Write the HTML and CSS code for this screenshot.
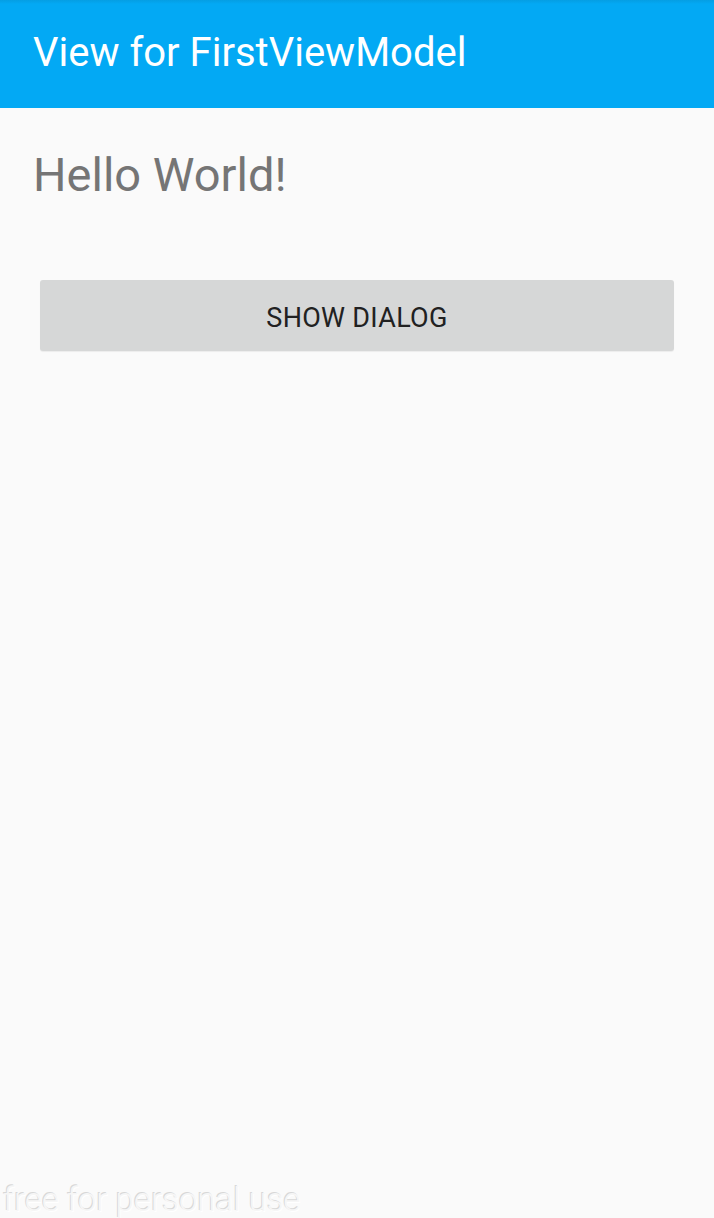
FILE: index.html
```html
<!DOCTYPE html>
<html>
<head>
<meta charset="utf-8">
<link rel="stylesheet" href="styles.css">
</head>
<body>
<div class="app">
  <header class="toolbar">
    <h1 class="title">View for FirstViewModel</h1>
  </header>
  <main class="content">
    <p class="hello">Hello World!</p>
    <button class="btn">SHOW DIALOG</button>
  </main>
  <footer class="watermark">free for personal use</footer>
</div>
</body>
</html>
```
FILE: styles.css
```css
html, body {
  margin: 0;
  padding: 0;
  height: 100%;
}
body {
  background: #fafafa;
  font-family: Roboto, "Liberation Sans", sans-serif;
}
.app {
  height: 1218px;
  display: flex;
  flex-direction: column;
}
.toolbar {
  height: 108px;
  background: linear-gradient(to bottom, #059ee3 0, #03a9f4 4px, #03a9f4 100%);
  display: flex;
  align-items: center;
  padding-left: 33px;
  box-sizing: border-box;
}
.title {
  margin: 0;
  color: #ffffff;
  font-weight: 400;
  font-size: 40px;
  line-height: 1;
  padding-bottom: 2px;
}
.content {
  flex: 1;
  display: flex;
  flex-direction: column;
  padding: 0 40px 0 33px;
}
.hello {
  margin: 40px 0 0 0;
  font-size: 47px;
  line-height: 54px;
  color: #757575;
}
.btn {
  margin: 78px 0 0 7px;
  height: 71px;
  padding: 4px 0 0 0;
  border: none;
  border-radius: 3px;
  background: #d6d7d7;
  color: #212121;
  font-family: Roboto, "Liberation Sans", sans-serif;
  font-size: 27px;
  letter-spacing: 0.3px;
  box-shadow: 0 1px 1px rgba(0,0,0,0.06);
}
.watermark {
  height: 42px;
  box-sizing: border-box;
  padding: 9px 0 0 3px;
  font-size: 33px;
  font-weight: 300;
  color: #f6f6f6;
  text-shadow: -1px -1px 0 #d8d8d8, 1px 1px 0 #ffffff;
  line-height: 30px;
}
```
